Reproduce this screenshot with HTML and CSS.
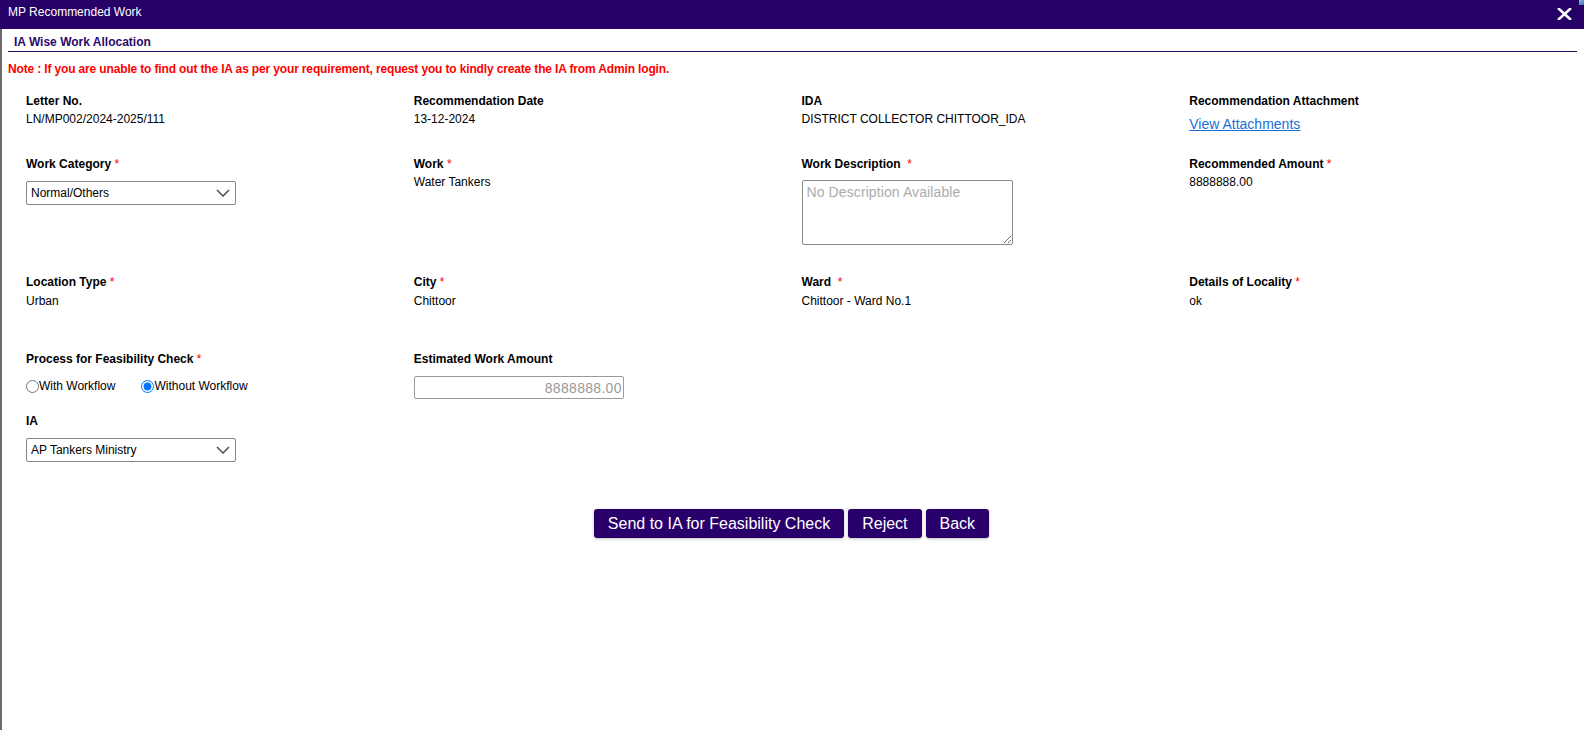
FILE: index.html
```html
<!DOCTYPE html>
<html>
<head>
<meta charset="utf-8">
<title>MP Recommended Work</title>
<link rel="stylesheet" href="styles.css">
</head>
<body>
<div class="header">
  <span class="title">MP Recommended Work</span>
  <svg class="close" width="15" height="12" viewBox="0 0 15 12"><path d="M2 1 L13 11 M13 1 L2 11" stroke="#fff" stroke-width="2.6" stroke-linecap="square"/></svg>
  <span class="corner"></span>
</div>
<div class="content">
  <div class="section-title">IA Wise Work Allocation</div>
  <div class="note">Note : If you are unable to find out the IA as per your requirement, request you to kindly create the IA from Admin login.</div>

  <div class="form">
    <div class="row row1">
      <div class="col"><div class="lbl">Letter No.</div><div class="val">LN/MP002/2024-2025/111</div></div>
      <div class="col"><div class="lbl">Recommendation Date</div><div class="val">13-12-2024</div></div>
      <div class="col"><div class="lbl">IDA</div><div class="val">DISTRICT COLLECTOR CHITTOOR_IDA</div></div>
      <div class="col"><div class="lbl">Recommendation Attachment</div><a class="link" href="#">View Attachments</a></div>
    </div>

    <div class="row row2">
      <div class="col"><div class="lbl">Work Category <span class="req">*</span></div>
        <div class="select-wrap">
          <select class="sel"><option>Normal/Others</option></select>
          <svg class="chev" width="14" height="8" viewBox="0 0 14 8"><path d="M1 1 L7 7 L13 1" fill="none" stroke="#555" stroke-width="1.6"/></svg>
        </div>
      </div>
      <div class="col"><div class="lbl">Work <span class="req">*</span></div><div class="val v2">Water Tankers</div></div>
      <div class="col"><div class="lbl">Work Description &nbsp;<span class="req">*</span></div>
        <textarea class="ta" placeholder="No Description Available"></textarea>
      </div>
      <div class="col"><div class="lbl">Recommended Amount <span class="req">*</span></div><div class="val v2">8888888.00</div></div>
    </div>

    <div class="row row3">
      <div class="col"><div class="lbl">Location Type <span class="req">*</span></div><div class="val v3">Urban</div></div>
      <div class="col"><div class="lbl">City <span class="req">*</span></div><div class="val v3">Chittoor</div></div>
      <div class="col"><div class="lbl">Ward &nbsp;<span class="req">*</span></div><div class="val v3">Chittoor - Ward No.1</div></div>
      <div class="col"><div class="lbl">Details of Locality <span class="req">*</span></div><div class="val v3">ok</div></div>
    </div>

    <div class="row row4">
      <div class="col"><div class="lbl">Process for Feasibility Check <span class="req">*</span></div>
        <div class="radios">
          <label class="radio r1"><input type="radio" name="p">With Workflow</label>
          <label class="radio"><input type="radio" name="p" checked>Without Workflow</label>
        </div>
      </div>
      <div class="col"><div class="lbl">Estimated Work Amount</div>
        <input class="amt" type="text" value="8888888.00" readonly>
      </div>
      <div class="col"></div>
      <div class="col"></div>
    </div>

    <div class="row row5">
      <div class="col"><div class="lbl">IA</div>
        <div class="select-wrap">
          <select class="sel"><option>AP Tankers Ministry</option></select>
          <svg class="chev" width="14" height="8" viewBox="0 0 14 8"><path d="M1 1 L7 7 L13 1" fill="none" stroke="#555" stroke-width="1.6"/></svg>
        </div>
      </div>
      <div class="col"></div>
      <div class="col"></div>
      <div class="col"></div>
    </div>
  </div>

  <div class="actions">
    <button class="btn">Send to IA for Feasibility Check</button>
    <button class="btn">Reject</button>
    <button class="btn">Back</button>
  </div>
</div>
</body>
</html>
```

FILE: styles.css
```css
* { box-sizing: border-box; }
html, body {
  margin: 0;
  padding: 0;
  background: #fff;
  font-family: "Liberation Sans", Arial, sans-serif;
  font-size: 12px;
  color: #000;
}
.header {
  position: relative;
  height: 29px;
  background: #260066;
  color: #fff;
  display: flex;
  align-items: flex-start;
  padding: 5px 12px 0 8px;
}
.title {
  line-height: 15px;
  font-size: 12px;
}
.close {
  margin-left: auto;
  margin-top: 3px;
  display: block;
}
.corner {
  position: absolute;
  right: 0;
  top: 0;
  width: 5px;
  height: 5px;
  background: linear-gradient(135deg, #8fb4e0, #3a6fb5);
}
.content {
  border-left: 2px solid #6b6b6b;
  min-height: 701px;
  padding: 0 7px 0 6px;
}
.section-title {
  font-weight: bold;
  color: #2a0a6b;
  line-height: 14px;
  padding: 6px 0 2px 6px;
  border-bottom: 1px solid #2a0a6b;
}
.note {
  color: #f00;
  font-weight: bold;
  line-height: 14px;
  margin-top: 10px;
  letter-spacing: -0.15px;
}
.form {
  margin: 18px 12px 0 6px;
}
.row {
  display: grid;
  grid-template-columns: repeat(4, 1fr);
}
.col {
  padding: 0 12px;
}
.lbl {
  font-weight: bold;
  line-height: 14px;
}
.req { color: #f00; font-weight: normal; }
.val {
  line-height: 14px;
  margin-top: 4px;
}
.v2 { margin-top: 4px; }
.v3 { margin-top: 5px; }
.link {
  display: block;
  font-size: 14px;
  line-height: 16px;
  margin-top: 8px;
  color: #1a6fd6;
  text-decoration: underline;
}
.row1 { margin-bottom: 25px; }
.row2 { margin-bottom: 30px; }
.row3 { margin-bottom: 44px; }
.row4 { margin-bottom: 15px; }
.select-wrap {
  position: relative;
  width: 210px;
  margin-top: 10px;
}
.sel {
  display: block;
  width: 210px;
  height: 24px;
  -webkit-appearance: none;
  appearance: none;
  border: 1px solid #858585;
  border-radius: 2px;
  background: #fff;
  font-family: "Liberation Sans", Arial, sans-serif;
  font-size: 12px;
  color: #000;
  padding: 0 4px;
}
.chev {
  position: absolute;
  right: 6px;
  top: 8px;
  pointer-events: none;
}
.ta {
  display: block;
  width: 211px;
  height: 65px;
  margin-top: 9px;
  border: 1px solid #8a8a8a;
  border-radius: 2px;
  padding: 3px 4px;
  font-family: "Liberation Sans", Arial, sans-serif;
  font-size: 14px;
  letter-spacing: 0.1px;
}
.ta::placeholder { color: #ababab; }
.radios {
  display: flex;
  align-items: center;
  margin-top: 13px;
  line-height: 14px;
}
.radio {
  display: flex;
  align-items: center;
}
.radio input {
  margin: 0;
  width: 13px;
  height: 13px;
}
.r1 { margin-right: 26px; }
.amt {
  display: block;
  width: 210px;
  height: 23px;
  margin-top: 10px;
  border: 1px solid #9a9a9a;
  border-radius: 2px;
  text-align: right;
  padding: 0 1px 0 4px;
  color: #9a9a9a;
  font-family: "Liberation Sans", Arial, sans-serif;
  font-size: 14px;
  letter-spacing: 0.3px;
  outline: none;
}
.actions {
  display: flex;
  justify-content: center;
  gap: 4px;
  margin-top: 47px;
  padding-right: 2px;
}
.btn {
  height: 29px;
  padding: 0 14px;
  border: none;
  border-radius: 3px;
  background: #29006b;
  color: #fff;
  font-family: "Liberation Sans", Arial, sans-serif;
  font-size: 16px;
  box-shadow: 0 1px 3px rgba(0,0,0,0.25);
}
```
